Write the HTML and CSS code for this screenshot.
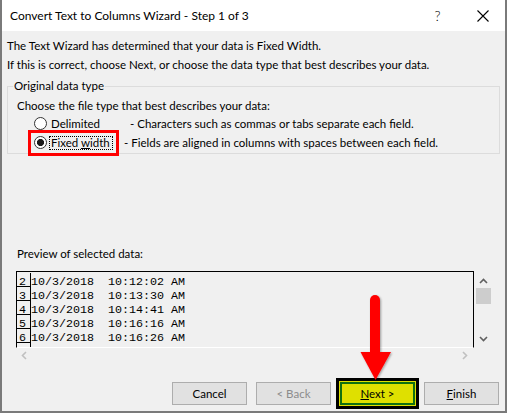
FILE: index.html
```html
<!DOCTYPE html>
<html>
<head>
    <meta charset="utf-8">
    <title>Convert Text to Columns Wizard - Step 1 of 3</title>
    <link rel="stylesheet" href="styles.css">
</head>
<body>
<div class="window">
    <div class="titlebar">
        <span class="title">Convert Text to Columns Wizard - Step 1 of 3</span>
        <span class="caption-btn help">?</span>
        <span class="caption-btn close">
            <svg width="12" height="12" viewBox="0 0 12 12"><path d="M0.5 0.5 L11.5 11.5 M11.5 0.5 L0.5 11.5" stroke="#000" stroke-width="1.1" fill="none"/></svg>
        </span>
    </div>
    <div class="content">
        <p class="line">The Text Wizard has determined that your data is Fixed Width.</p>
        <p class="line">If this is correct, choose Next, or choose the data type that best describes your data.</p>

        <fieldset class="group">
            <legend>Original data type</legend>
            <div class="prompt">Choose the file type that best describes your data:</div>
            <div class="option">
                <span class="choice"><span class="radio"></span><span class="label">Delimited</span></span>
                <span class="desc shifted">- Characters such as commas or tabs separate each field.</span>
            </div>
            <div class="option">
                <span class="choice marked"><span class="radio checked"></span><span class="label focused">Fixed <u>w</u>idth</span></span>
                <span class="desc">- Fields are aligned in columns with spaces between each field.</span>
            </div>
        </fieldset>

        <div class="preview-label">Preview of selected data:</div>
        <div class="preview">
            <div class="data">
                <div class="row"><span class="num">2</span><span class="text">10/3/2018  10:12:02 AM</span></div>
                <div class="row"><span class="num">3</span><span class="text">10/3/2018  10:13:30 AM</span></div>
                <div class="row"><span class="num">4</span><span class="text">10/3/2018  10:14:41 AM</span></div>
                <div class="row"><span class="num">5</span><span class="text">10/3/2018  10:16:16 AM</span></div>
                <div class="row"><span class="num">6</span><span class="text">10/3/2018  10:16:26 AM</span></div>
                <div class="row"><span class="num"></span><span class="text"></span></div>
            </div>
            <div class="vscroll">
                <svg class="chev" width="9" height="6" viewBox="0 0 9 6"><path d="M1 5 L4.5 1.5 L8 5" stroke="#606060" stroke-width="1.6" fill="none"/></svg>
                <div class="thumb"></div>
                <div class="spacer"></div>
                <svg class="chev down" width="9" height="6" viewBox="0 0 9 6"><path d="M1 1 L4.5 4.5 L8 1" stroke="#606060" stroke-width="1.6" fill="none"/></svg>
            </div>
            <div class="hscroll">
                <svg width="6" height="9" viewBox="0 0 6 9"><path d="M5 1 L1.5 4.5 L5 8" stroke="#c0c0c0" stroke-width="1.6" fill="none"/></svg>
                <svg width="6" height="9" viewBox="0 0 6 9"><path d="M1 1 L4.5 4.5 L1 8" stroke="#c0c0c0" stroke-width="1.6" fill="none"/></svg>
            </div>
        </div>

        <div class="buttons">
            <button class="btn">Cancel</button>
            <button class="btn disabled">&lt; Back</button>
            <button class="btn next"><u>N</u>ext &gt;</button>
            <button class="btn"><u>F</u>inish</button>
        </div>
    </div>

    <!-- annotation arrow pointing at Next -->
    <svg class="arrow" width="45" height="95" viewBox="0 0 45 95">
        <defs>
            <filter id="shadow" x="-30%" y="-10%" width="160%" height="130%">
                <feDropShadow dx="1" dy="1" stdDeviation="1" flood-color="#000" flood-opacity="0.35"/>
            </filter>
        </defs>
        <g filter="url(#shadow)" fill="#f00">
            <rect x="15" y="5" width="10" height="62" rx="5"/>
            <polygon points="5.5,62 36,62 20.5,90"/>
        </g>
    </svg>
</div>
</body>
</html>
```

FILE: styles.css
```css
* {
    box-sizing: border-box;
}
body {
    margin: 0;
    background: #f0f0f0;
    color: #000;
    font-family: Lato, "Noto Sans", sans-serif;
    font-size: 11.5px;
}

/* dialog frame */
.window {
    position: relative;
    width: 507px;
    height: 413px;
    background: #f0f0f0;
    border: 2px solid #7a7a7a;
    border-top: 0;
}
.titlebar {
    display: flex;
    align-items: center;
    height: 31px;
    background: #fff;
    padding-left: 8px;
}
.title {
    flex: 1;
    font-size: 12px;
}
.caption-btn {
    width: 45px;
    text-align: center;
}
.help {
    font-size: 14px;
    font-weight: 300;
}
.close svg {
    display: block;
    margin: 0 auto;
}

.content {
    padding: 5px 5px 0 5px;
}
.line {
    margin: 0;
    line-height: 19px;
}

/* group box */
.group {
    margin: 4px 0 0;
    padding: 0 0 1px;
    border: 1px solid #dcdcdc;
    min-width: 0;
}
.group legend {
    margin-left: 5px;
    padding: 0 1px;
    line-height: 16px;
}
.prompt {
    padding: 4px 0 0 9px;
    line-height: 16px;
}
.option {
    display: grid;
    grid-template-columns: 90px auto;
    align-items: center;
    height: 19px;
    padding-left: 26px;
}
.choice {
    display: inline-flex;
    align-items: center;
    justify-self: start;
}
.radio {
    width: 13px;
    height: 13px;
    border: 1px solid #333;
    border-radius: 50%;
    background: #fff;
    margin-right: 2px;
}
.radio.checked {
    background: radial-gradient(circle, #1a1a1a 0 3.3px, #fff 3.8px);
}
.label {
    padding: 0 2px 0 1px;
    border: 1px dotted transparent;
    line-height: 12px;
}
.label.focused {
    border-color: #000;
}
.marked {
    outline: 3px solid #f00;
    outline-offset: 3px;
}
.desc.shifted {
    margin-left: 6px;
}

/* preview */
.preview-label {
    margin: 92px 0 0 10px;
    line-height: 16px;
}
.preview {
    display: grid;
    grid-template-columns: 458px 17px;
    grid-template-rows: 77px 15px;
    width: 475px;
    margin: 9px 0 0 9px;
}
.data {
    border: 1px solid #000;
    border-bottom-color: #fff;
    padding-top: 1px;
    overflow: hidden;
    font-family: "Liberation Mono", monospace;
    font-size: 11.67px;
}
.row {
    display: flex;
    height: 14px;
}
.num,
.text {
    height: 14px;
    padding-top: 2px;
    line-height: 14px;
}
.num {
    width: 14px;
    padding-left: 2px;
    border-right: 1px solid #000;
    border-bottom: 1px solid #000;
}
.text {
    white-space: pre;
}
.vscroll {
    display: flex;
    flex-direction: column;
    align-items: center;
    padding: 7px 0 6px 1px;
}
.thumb {
    width: 15px;
    height: 16px;
    margin-top: 4px;
    background: #cdcdcd;
}
.spacer {
    flex: 1;
}
.hscroll {
    display: flex;
    justify-content: space-between;
    align-items: center;
    padding: 0 6px 0 5px;
}

/* buttons */
.buttons {
    display: flex;
    justify-content: flex-end;
    gap: 9px;
    margin-top: 19px;
    padding-right: 1px;
}
.btn {
    width: 75px;
    height: 23px;
    padding: 0;
    background: #e1e1e1;
    border: 1px solid #adadad;
    color: #000;
    font-family: inherit;
    font-size: 11.5px;
}
.btn.disabled {
    color: #8c8c8c;
}
.btn.next {
    background: #dfe000;
    border: 2px solid #107010;
    box-shadow: 0 0 0 1px #dfe000, 0 0 0 4px #000;
}

.arrow {
    position: absolute;
    left: 353px;
    top: 290px;
}
```
